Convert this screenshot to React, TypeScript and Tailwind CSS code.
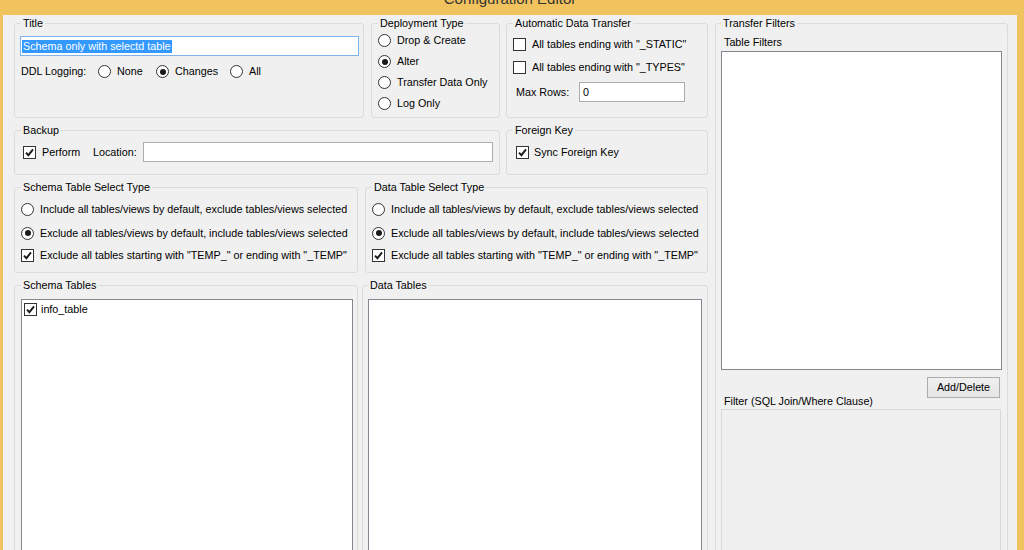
import type { ReactNode } from 'react'

function GroupBox({
  title,
  className = '',
  children,
}: {
  title: string
  className?: string
  children?: ReactNode
}) {
  return (
    <fieldset className={`border border-[#dcdcdc] rounded-[3px] min-w-0 shrink-0 ${className}`}>
      <legend className="px-[2px] leading-[13px]">{title}</legend>
      {children}
    </fieldset>
  )
}

function Radio({ checked }: { checked?: boolean }) {
  return (
    <span className="w-[13px] h-[13px] rounded-full border border-[#333] bg-white flex items-center justify-center shrink-0">
      {checked && <span className="w-[6px] h-[6px] rounded-full bg-[#1a1a1a]" />}
    </span>
  )
}

function Check({ checked }: { checked?: boolean }) {
  return (
    <span className="w-[13px] h-[13px] border border-[#333] bg-white flex items-center justify-center shrink-0">
      {checked && (
        <svg width="9" height="9" viewBox="0 0 9 9">
          <path d="M1 4.6 L3.4 7.2 L8 1.4" stroke="#1a1a1a" strokeWidth="1.9" fill="none" />
        </svg>
      )}
    </span>
  )
}

function Option({
  type,
  checked,
  label,
  className = '',
}: {
  type: 'radio' | 'check'
  checked?: boolean
  label: string
  className?: string
}) {
  return (
    <div className={`flex items-center gap-[6px] whitespace-nowrap ${className}`}>
      {type === 'radio' ? <Radio checked={checked} /> : <Check checked={checked} />}
      <span className="leading-[13px]">{label}</span>
    </div>
  )
}

function SelectType({ title, className }: { title: string; className: string }) {
  return (
    <GroupBox title={title} className={`h-[92px] px-[6px] ${className}`}>
      <div className="mt-[4px] flex flex-col">
        <Option type="radio" label="Include all tables/views by default, exclude tables/views selected" className="h-[23px]" />
        <Option type="radio" checked label="Exclude all tables/views by default, include tables/views selected" className="h-[24px]" />
        <Option type="check" checked label={'Exclude all tables starting with "TEMP_" or ending with "_TEMP"'} className="h-[21px]" />
      </div>
    </GroupBox>
  )
}

export default function App() {
  return (
    <div className="w-[1024px] h-[550px] overflow-hidden bg-[#f1c35e] flex flex-col font-['Liberation_Sans',Arial,sans-serif] text-[10.75px] text-black">
      {/* Window caption, mostly scrolled off the top */}
      <div className="h-[15px] shrink-0 flex justify-center overflow-hidden pr-[4px]">
        <span className="text-[15px] leading-[15px] -mt-[9px] text-[#333]">Configuration Editor</span>
      </div>

      <div className="flex-1 ml-[3px] mr-[7px] bg-[#f0f0f0] flex gap-[7px] pl-[11px] pt-[2px] overflow-hidden">
        {/* Left side */}
        <div className="w-[694px] shrink-0 flex flex-col gap-[6px]">
          {/* Row 1 */}
          <div className="flex">
            <GroupBox title="Title" className="w-[350px] h-[101px] px-[6px]">
              <div className="mt-[6px] -ml-[1px] w-[339px] h-[20px] bg-white border border-[#7eb4ea] flex items-center pl-[1px]">
                <span className="bg-[#3399ff] text-white leading-[13px] px-[1px]">Schema only with selectd table</span>
              </div>
              <div className="mt-[5px] h-[21px] flex items-center">
                <span className="w-[77px] leading-[13px]">DDL Logging:</span>
                <Option type="radio" label="None" className="w-[58px]" />
                <Option type="radio" checked label="Changes" className="w-[74px]" />
                <Option type="radio" label="All" />
              </div>
            </GroupBox>
            <GroupBox title="Deployment Type" className="ml-[7px] w-[129px] h-[101px] px-[6px]">
              <div className="flex flex-col">
                <Option type="radio" label="Drop & Create" className="h-[21px]" />
                <Option type="radio" checked label="Alter" className="h-[21px]" />
                <Option type="radio" label="Transfer Data Only" className="h-[21px]" />
                <Option type="radio" label="Log Only" className="h-[21px]" />
              </div>
            </GroupBox>
            <GroupBox title="Automatic Data Transfer" className="ml-[6px] w-[202px] h-[101px] px-[6px]">
              <div className="mt-[3px] flex flex-col">
                <Option type="check" label={'All tables ending with "_STATIC"'} className="h-[23px]" />
                <Option type="check" label={'All tables ending with "_TYPES"'} className="h-[23px]" />
              </div>
              <div className="mt-[3px] flex items-center">
                <span className="ml-[3px] w-[63px] leading-[13px]">Max Rows:</span>
                <div className="w-[106px] h-[20px] bg-white border border-[#abadb3] flex items-center pl-[3px] leading-[13px]">
                  0
                </div>
              </div>
            </GroupBox>
          </div>

          {/* Row 2 */}
          <div className="flex">
            <GroupBox title="Backup" className="w-[486px] h-[51px] px-[6px]">
              <div className="mt-[5px] h-[20px] flex items-center">
                <Option type="check" checked label="Perform" className="ml-[2px] w-[70px]" />
                <span className="w-[50px] leading-[13px]">Location:</span>
                <div className="w-[350px] h-[20px] bg-white border border-[#abadb3]" />
              </div>
            </GroupBox>
            <GroupBox title="Foreign Key" className="ml-[6px] w-[202px] h-[51px] px-[6px]">
              <div className="mt-[5px] h-[20px] flex items-center">
                <div className="ml-[3px] flex items-center gap-[5px]">
                  <Check checked />
                  <span className="leading-[13px]">Sync Foreign Key</span>
                </div>
              </div>
            </GroupBox>
          </div>

          {/* Row 3 */}
          <div className="flex">
            <SelectType title="Schema Table Select Type" className="w-[344px]" />
            <SelectType title="Data Table Select Type" className="ml-[7px] w-[343px]" />
          </div>

          {/* Row 4 */}
          <div className="flex">
            <GroupBox title="Schema Tables" className="w-[344px] h-[300px] px-[6px]">
              <div className="mt-[7px] w-[332px] h-[280px] bg-white border border-[#828790] pt-[3px] pl-[2px]">
                <div className="flex items-center gap-[4px]">
                  <Check checked />
                  <span className="leading-[13px]">info_table</span>
                </div>
              </div>
            </GroupBox>
            <GroupBox title="Data Tables" className="ml-[4px] w-[346px] h-[300px] px-[5px]">
              <div className="mt-[7px] w-[334px] h-[280px] bg-white border border-[#828790]" />
            </GroupBox>
          </div>
        </div>

        {/* Right side */}
        <GroupBox title="Transfer Filters" className="w-[293px] h-[600px] px-[5px] flex flex-col">
          <div className="mt-[6px] ml-[3px] leading-[13px]">Table Filters</div>
          <div className="mt-[2px] w-[281px] h-[319px] bg-white border border-[#828790]" />
          <div className="mt-[7px] flex justify-end pr-[2px]">
            <button className="w-[73px] h-[21px] border border-[#acacac] bg-gradient-to-b from-[#f0f0f0] to-[#e5e5e5] leading-[13px] text-black">
              Add/Delete
            </button>
          </div>
          <div className="-mt-[3px] ml-[3px] leading-[13px]">Filter (SQL Join/Where Clause)</div>
          <div className="mt-[1px] w-[280px] h-[200px] bg-[#f0f0f0] border border-[#d9d9d9]" />
        </GroupBox>
      </div>
    </div>
  )
}
